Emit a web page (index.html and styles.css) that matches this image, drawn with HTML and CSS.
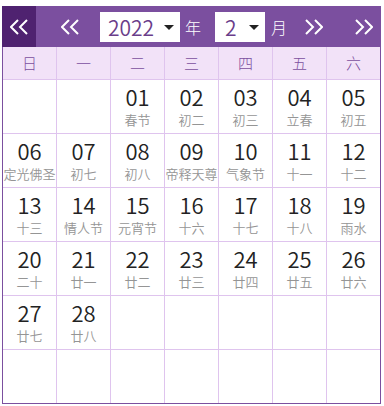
FILE: index.html
```html
<!DOCTYPE html>
<html lang="zh-CN">
<head>
    <meta charset="UTF-8">
    <meta name="viewport" content="width=device-width, initial-scale=1.0">
    <link rel="stylesheet" href="styles.css">
    <title>万年历</title>
</head>
<body>
    <div class="calendar">
        <div class="cal-head">
            <div class="year-btn">
                <svg width="18" height="16" viewBox="0 0 18 16"><polyline points="8,1 1,8 8,15"/><polyline points="17,1 10,8 17,15"/></svg>
            </div>
            <svg class="month-prev" width="18" height="16" viewBox="0 0 18 16"><polyline points="8,1 1,8 8,15"/><polyline points="17,1 10,8 17,15"/></svg>
            <div class="pick pick-year">2022<span class="caret"></span></div>
            <span class="unit unit-year">年</span>
            <div class="pick pick-month">2<span class="caret"></span></div>
            <span class="unit unit-month">月</span>
            <svg class="month-next" width="18" height="16" viewBox="0 0 18 16"><polyline points="1,1 8,8 1,15"/><polyline points="10,1 17,8 10,15"/></svg>
            <div class="year-btn year-next">
                <svg width="18" height="16" viewBox="0 0 18 16"><polyline points="1,1 8,8 1,15"/><polyline points="10,1 17,8 10,15"/></svg>
            </div>
        </div>
        <div class="cal-body">
            <div class="week">日</div><div class="week">一</div><div class="week">二</div><div class="week">三</div><div class="week">四</div><div class="week">五</div><div class="week">六</div>

            <div class="day"></div>
            <div class="day"></div>
            <div class="day"><b>01</b><i>春节</i></div>
            <div class="day"><b>02</b><i>初二</i></div>
            <div class="day"><b>03</b><i>初三</i></div>
            <div class="day"><b>04</b><i>立春</i></div>
            <div class="day"><b>05</b><i>初五</i></div>

            <div class="day"><b>06</b><i>定光佛圣</i></div>
            <div class="day"><b>07</b><i>初七</i></div>
            <div class="day"><b>08</b><i>初八</i></div>
            <div class="day"><b>09</b><i>帝释天尊</i></div>
            <div class="day"><b>10</b><i>气象节</i></div>
            <div class="day"><b>11</b><i>十一</i></div>
            <div class="day"><b>12</b><i>十二</i></div>

            <div class="day"><b>13</b><i>十三</i></div>
            <div class="day"><b>14</b><i>情人节</i></div>
            <div class="day"><b>15</b><i>元宵节</i></div>
            <div class="day"><b>16</b><i>十六</i></div>
            <div class="day"><b>17</b><i>十七</i></div>
            <div class="day"><b>18</b><i>十八</i></div>
            <div class="day"><b>19</b><i>雨水</i></div>

            <div class="day"><b>20</b><i>二十</i></div>
            <div class="day"><b>21</b><i>廿一</i></div>
            <div class="day"><b>22</b><i>廿二</i></div>
            <div class="day"><b>23</b><i>廿三</i></div>
            <div class="day"><b>24</b><i>廿四</i></div>
            <div class="day"><b>25</b><i>廿五</i></div>
            <div class="day"><b>26</b><i>廿六</i></div>

            <div class="day"><b>27</b><i>廿七</i></div>
            <div class="day"><b>28</b><i>廿八</i></div>
            <div class="day"></div>
            <div class="day"></div>
            <div class="day"></div>
            <div class="day"></div>
            <div class="day"></div>

            <div class="day last"></div>
            <div class="day last"></div>
            <div class="day last"></div>
            <div class="day last"></div>
            <div class="day last"></div>
            <div class="day last"></div>
            <div class="day last"></div>
        </div>
    </div>
</body>
</html>
```

FILE: styles.css
```css
body {
    margin: 0;
    font-family: "Noto Sans CJK SC", "Noto Sans", sans-serif;
}
.calendar {
    width: 379px;
    margin: 6px 0 0 2px;
}
.cal-head {
    display: flex;
    align-items: center;
    height: 41px;
    background: #7b4f9f;
    color: #fff;
}
.cal-head svg {
    display: block;
    fill: none;
    stroke: #fff;
    stroke-width: 2;
}
.year-btn {
    width: 34px;
    height: 100%;
    display: flex;
    justify-content: center;
    align-items: center;
    background: #4f2270;
}
.year-next {
    margin-left: auto;
    background: transparent;
}
.month-prev {
    margin: 0 21px 0 25px;
}
.month-next {
    margin-left: 18px;
}
.pick {
    position: relative;
    height: 30px;
    background: #fff;
    color: #6a3d8a;
    font-size: 21px;
    font-weight: 350;
    line-height: 30px;
    box-sizing: border-box;
}
.pick-year {
    width: 80px;
    padding-left: 8px;
}
.pick-month {
    width: 50px;
    padding-left: 10px;
}
.caret {
    position: absolute;
    right: 6px;
    top: 13px;
    border-left: 5px solid transparent;
    border-right: 5px solid transparent;
    border-top: 5px solid #222;
}
.unit {
    font-size: 16px;
    font-weight: 300;
    line-height: 20px;
}
.unit-year {
    margin: 0 14px 0 5px;
}
.unit-month {
    margin-left: 6px;
}
.cal-body {
    display: grid;
    grid-template-columns: repeat(6, 54px) 53px;
    border: 1px solid #7b4f9f;
    border-top: none;
}
.week {
    height: 33px;
    line-height: 32px;
    text-align: center;
    font-size: 15px;
    font-weight: 300;
    color: #7b4f9f;
    background: #f2e2f8;
    border-right: 1px solid #dfc4ee;
    border-bottom: 1px solid #dfc4ee;
    box-sizing: border-box;
}
.day {
    height: 54px;
    padding-top: 4px;
    text-align: center;
    border-right: 1px solid #dfc4ee;
    border-bottom: 1px solid #dfc4ee;
    box-sizing: border-box;
}
.week:nth-child(7n), .day:nth-child(7n) {
    border-right: none;
}
.day.last {
    height: 53px;
    border-bottom: none;
}
.day b {
    display: block;
    font-weight: 350;
    font-size: 22px;
    line-height: 24px;
    color: #222;
}
.day i {
    display: block;
    margin-top: 4px;
    font-style: normal;
    font-weight: 350;
    font-size: 13px;
    line-height: 16px;
    color: #959595;
    white-space: nowrap;
}
```
